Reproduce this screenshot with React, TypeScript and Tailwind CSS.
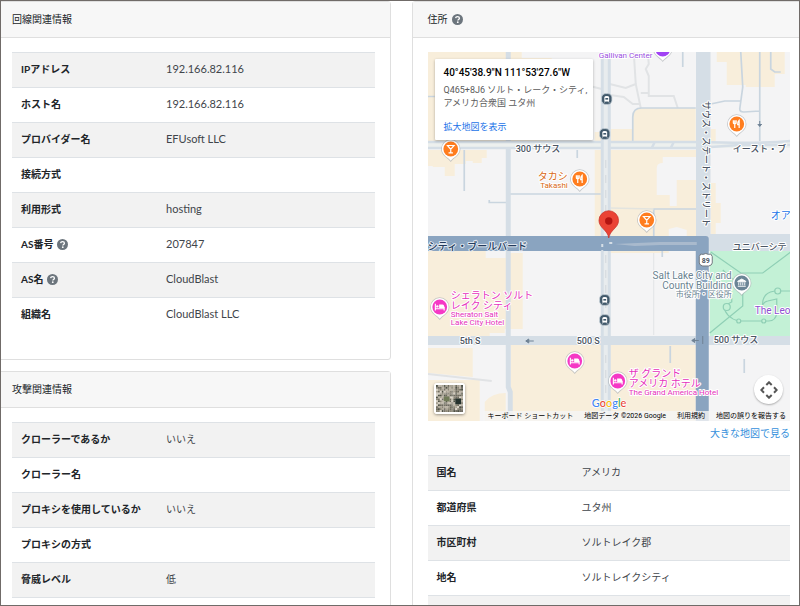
import type { ReactNode } from "react";

const UI_FONT = "font-['Lato','Noto_Sans_CJK_JP',sans-serif]";
const MAP_FONT = "font-['Roboto','Noto_Sans_CJK_JP',sans-serif]";

function HelpIcon() {
  return (
    <svg viewBox="0 0 20 20" className="ml-1 inline-block size-[11px] align-[-2px]" role="img" aria-label="ヘルプ">
      <circle cx="10" cy="10" r="10" fill="#6c757d" />
      <path d="M6.600 7.600C6.800 5.600 8.200 4.700 10 4.700c2 0 3.500 1.100 3.500 2.900 0 2.300-2.900 2.300-2.900 4.400" fill="none" stroke="#fff" strokeWidth="2.400" />
      <circle cx="10.500" cy="14.800" r="1.600" fill="#fff" />
    </svg>
  );
}

type Row = { label: string; value?: string; latin?: boolean; help?: boolean };

function InfoTable({ rows }: { rows: Row[] }) {
  return (
    <table className="w-full table-fixed border-collapse">
      <tbody>
        {rows.map((r) => (
          <tr key={r.label} className="h-[35px] border-t border-[#dee2e6] odd:border-b odd:bg-[#f2f2f2]">
            <th scope="row" className="w-2/5 px-[9px] pb-[2px] text-left text-[10px] leading-4 font-bold text-[#212529]">
              {r.label}
              {r.help && <HelpIcon />}
            </th>
            <td className={`px-[9px] pb-[2px] leading-4 text-[#3f454b] ${r.latin ? "text-[11px]" : "text-[10px]"}`}>{r.value}</td>
          </tr>
        ))}
      </tbody>
    </table>
  );
}

function Card({ title, help, children }: { title: string; help?: boolean; children: ReactNode }) {
  return (
    <section className="rounded-[3px] border border-[#dfdfdf] bg-white">
      <h2 className="flex h-9 items-center border-b border-[#dfdfdf] bg-[#f7f7f7] px-[15px] text-[10px] text-[#212529]">
        {title}
        {help && <HelpIcon />}
      </h2>
      <div className="px-[15px] pt-[14px] pb-[26px]">{children}</div>
    </section>
  );
}

/* ---------- map drawing ---------- */

const BEIGE = "#f8eedb";
const ROAD = "#d5dee6";
const BLUE = "#8aa4c0";

function Pin({ x, y, color, kind }: { x: number; y: number; color: string; kind: "food" | "bar" | "bed" | "civic" | "plain" }) {
  return (
    <g transform={`translate(${x} ${y})`}>
      <path d="M0 13C-2.500 9.200-9.700 6.800-9.700 0a9.700 9.700 0 0 1 19.400 0C9.700 6.800 2.500 9.200 0 13Z" fill="#a9adb2" opacity=".65" />
      <path d="M0 11.800C-2.500 8.200-8.900 6.300-8.900 0a8.900 8.900 0 0 1 17.800 0C8.900 6.300 2.500 8.200 0 11.800Z" fill="#fff" />
      <circle r="7.400" fill={color} />
      {kind === "food" && (
        <g stroke="#fff" strokeWidth="1.200" fill="none">
          <path d="M-3.400-3.800v2.600q0 1 1.400 1t1.400-1v-2.600M-2-3.800V4M2.400 4V-3.800Q.8-2.600.9.6h1.500" />
        </g>
      )}
      {kind === "bar" && (
        <path d="M-3.300-3.500h6.600L0 .4ZM0 0v3.800M-2.200 3.900h4.400" fill="none" stroke="#fff" strokeWidth="1.200" />
      )}
      {kind === "bed" && (
        <g>
          <path d="M-4.400-3.200V3.400M-4.400 1.800h8.800M4.400-.2v3.600" stroke="#fff" strokeWidth="1.100" fill="none" />
          <path d="M-.6-2.400h3.400q1.600 0 1.600 1.800v1.600h-5Z" fill="#fff" />
          <circle cx="-2.400" cy="-.6" r="1.200" fill="#fff" />
        </g>
      )}
      {kind === "civic" && (
        <path d="M-4-1.800 0-4l4 2.200v.6h-8ZM-3-.6v3M-1-.6v3M1-.6v3M3-.6v3M-4 3.300h8" fill="#fff" stroke="#fff" strokeWidth=".9" />
      )}
    </g>
  );
}

function Station({ y, x = 605 }: { y: number; x?: number }) {
  return (
    <g transform={`translate(${x} ${y})`}>
      <rect x="-5.200" y="-5.400" width="10.400" height="10.800" rx="4.200" fill="#41596b" stroke="#c9d3da" strokeWidth=".8" />
      <path d="M-2.400 2.400v-4Q-2.400-3 0-3t2.400 1.400v4Z" fill="#fff" />
      <path d="M-1.400-1h2.800v1.600h-2.800Z" fill="#41596b" />
      <path d="m-1.600 2.400-.9 1.200M1.600 2.400l.9 1.200" stroke="#fff" strokeWidth=".7" />
    </g>
  );
}

type LabelProps = {
  x: number;
  y: number;
  size?: number;
  fill?: string;
  halo?: string;
  anchor?: "start" | "end";
  weight?: number;
  transform?: string;
  children: string;
};

function Label({ x, y, size = 9, fill = "#4b5563", halo = "#ffffff", anchor = "start", weight = 500, transform, children }: LabelProps) {
  return (
    <text x={x} y={y} fontSize={size} fill={fill} stroke={halo} strokeWidth="2" strokeLinejoin="round" paintOrder="stroke" textAnchor={anchor} fontWeight={weight} transform={transform}>
      {children}
    </text>
  );
}

function MapDrawing() {
  return (
    <svg viewBox="428 52 363 369" preserveAspectRatio="xMidYMid slice" className="block h-full w-full" role="img" aria-label="ソルトレイクシティの地図">
      <rect x="428" y="52" width="363" height="369" fill="#f4f4f5" />

      <g fill={BEIGE}>
        <path d="M428 52h94v6h30v83H428Z" />
        <path d="M595 132h7v9h-7ZM428 150h59v8h-5v5h-9v-2h-7v3h-11v12h-10v-9h-12v-1h-5Z" />
        <path d="M595 150h102v86H595Z" />
        <path d="M428 250h58v8h20v-5h17v76h-18v4h-15v3h-62Z" />
        <path d="M428 348h45v29l-45-4ZM428 380h52v41h-52ZM485 402q7-9 21-9v28h-21Z" />
        <path d="M511 345h185v76H511Z" />
        <path d="M633 117q0-9 9-9h54v33h-85v-12h22Z" />
        <path d="M717 52h68v22h-10v13h-29v-2h-19v-23h-10ZM711 129h5v12h-5ZM711 183h5v20h5v20h-5v12h-5Z" />
        <path d="M611 250h58v3h-58Z" />
      </g>
      <path d="M657 168q0-5 6-5v-6h34v23h-20v26h-7v-11h-13ZM669 229l8-2 10 3v6h-18Z" fill="#f4f4f5" />
      <path d="M710 251h81v87h-81Z" fill="#c3f1d6" />

      <g fill="none" stroke="#e1e3e5" strokeWidth="2">
        <path d="M610 84l16 4 10-4-2-32M636 84l5 24M610 95l14 2 9 7h8M648 52l1 12-3 5 3 7v20h25l4 12M641 93h8M578 83l32 8M428 374l64 7" />
        <path d="M654 253v82" strokeWidth="1" />
      </g>
      <g fill="none" stroke="#c9d5df" strokeWidth="1.700">
        <path d="M428 96.500h7M464.500 150v41M577.500 150v8M489.500 200v2.500h17M508 194h93" />
        <path d="M633 141v-24q0-9 9-9h54M683 52v15M741 52l2 35-3 22q0 3 4 3l16-1M760 52v89M771 52v17l4 3h6M711 104l14-3h16" />
        <path d="M654 236v-27h43M662.500 250v7M670.500 346v17M744.500 359v14" />
        <path d="M611 208l43 1" stroke="#e3e4df" />
      </g>

      <g stroke={ROAD} fill="none">
        <path d="M508.500 52v335l2 5v29" strokeWidth="5" />
        <path d="M428 145h363" stroke="#edf0ee" strokeWidth="6" />
        <path d="M428 142h270q65 2 93-1M428 148h269l42-3h52" strokeWidth="2.500" />
        <path d="M652 148l3-6M671 148l3-6" strokeWidth="2.500" />
        <path d="M606 52v369" strokeWidth="9" stroke="#e8ecee" />
        <path d="M602.500 52v369M609.500 52v369" strokeWidth="3" />
        <path d="M606 160v70M606 255v75M606 355v60" stroke="#c8cfd4" strokeWidth=".7" strokeDasharray="8 7" />
        <path d="M428 340.500h363" strokeWidth="9" />
        <path d="M703.500 52v190" strokeWidth="14.500" />
        <path d="M708 242.500h83" strokeWidth="17" />
      </g>
      <path d="M428 236h278q3 0 3 3v182h-13V251H428Z" fill={BLUE} />
      <path d="M615 244l45-2h37v3h-37l-25 1Z" fill="#a9bacd" />
      <path d="M602.500 244v12M609.500 243h4" stroke={ROAD} strokeWidth="2" strokeDasharray="3 3" />
      <path d="M527 341h7m-5-2-3 2 3 2ZM693 340.500h6m-4-2-3 2 3 2ZM703 336v8M760 121v5m-2-2 2 2.500 2-2.500" stroke="#6f8295" strokeWidth="1" fill="#6f8295" />

      <g fill="none" stroke="#8fcfb5" strokeWidth="1.200">
        <path d="M711 252l30 21h22l28-21M710 333l33-27v-18l-20-18M732 298v4l-8 4q2 12 15 15h30q7 0 8-8v-14l-9 2q-6 1-6 10M778 291q-17 0-15 17M778 291h13" />
        <circle cx="727" cy="307" r="3.500" fill="#c3f1d6" />
        <circle cx="778" cy="291" r="3" fill="#c3f1d6" />
        <circle cx="739" cy="321" r="2" fill="#c3f1d6" />
        <circle cx="764" cy="321" r="2" fill="#c3f1d6" />
      </g>

      <Station y={99} x={607} />
      <Station y={134} />
      <Station y={300} />
      <Station y={320} />

      <Label x={516} y={152}>300 サウス</Label>
      <Label x={733} y={152}>イースト・ブ</Label>
      <Label x={428} y={250} size={10} fill="#243b5c" halo="#dfe7f0">シティ・ブールバード</Label>
      <Label x={733} y={250}>ユニバーシテ</Label>
      <Label x={460} y={344}>5th S</Label>
      <Label x={577} y={344}>500 S</Label>
      <Label x={714} y={343}>500 サウス</Label>
      <Label x={0} y={0} transform="translate(703 101) rotate(90)">サウス・ステート・ストリート</Label>

      <Pin x={663} y={49} color="#a142f4" kind="plain" />
      <Label x={599} y={58} size={8} fill="#9b4fe0" weight={400}>Gallivan Center</Label>
      <Pin x={451} y={149} color="#ff7d1f" kind="bar" />
      <Pin x={737} y={124} color="#ff7d1f" kind="food" />
      <Pin x={580} y={179} color="#ff7d1f" kind="food" />
      <Label x={568} y={180} size={10} fill="#d96a16" anchor="end" weight={400}>タカシ</Label>
      <Label x={568} y={188} size={8} fill="#d96a16" anchor="end" weight={400}>Takashi</Label>
      <Pin x={647} y={220} color="#ff7d1f" kind="bar" />
      <Label x={771} y={219} size={10} fill="#1a73e8" weight={400}>オア</Label>

      <g transform="translate(706 260)">
        <path d="M-5-6q2 1 5-.5Q3-5 5-6L6.500-3.500V3Q6 5.500 3 6H-3Q-6 5.500-6.500 3V-3.500Z" fill="#fff" stroke="#737980" strokeWidth="1" />
        <text textAnchor="middle" y="2.500" fontSize="7" fontWeight="700" fill="#4b5563">89</text>
      </g>
      <Pin x={742} y={283} color="#6c8596" kind="civic" />
      <Label x={732} y={279} size={10} fill="#6a8290" anchor="end" weight={400}>Salt Lake City and</Label>
      <Label x={732} y={289} size={10} fill="#6a8290" anchor="end" weight={400}>County Building</Label>
      <Label x={732} y={297} size={8} fill="#6a8290" anchor="end" weight={400}>市役所・区役所</Label>
      <Label x={755} y={314} size={10} fill="#8e4fd0" weight={400}>The Leo</Label>

      <Pin x={440} y={307} color="#f538c5" kind="bed" />
      <Label x={451} y={299} size={10} fill="#e632bb" weight={400}>シェラトン ソルト</Label>
      <Label x={451} y={309} size={10} fill="#e632bb" weight={400}>レイク シティ</Label>
      <Label x={451} y={317} size={8} fill="#e632bb" weight={400}>Sheraton Salt</Label>
      <Label x={451} y={325} size={8} fill="#e632bb" weight={400}>Lake City Hotel</Label>
      <Pin x={575} y={361} color="#f538c5" kind="bed" />
      <Pin x={618} y={381} color="#f538c5" kind="bed" />
      <Label x={629} y={377} size={10} fill="#e632bb" weight={400}>ザ グランド</Label>
      <Label x={629} y={387} size={10} fill="#e632bb" weight={400}>アメリカ ホテル</Label>
      <Label x={629} y={395} size={8} fill="#e632bb" weight={400}>The Grand America Hotel</Label>

      <path d="M609 238c-1-8-9.800-10-9.800-17.500a9.800 9.800 0 0 1 19.600 0c0 7.500-8.800 9.500-9.800 17.500Z" fill="#ea4335" stroke="#c5302a" strokeWidth=".7" />
      <circle cx="609" cy="221" r="3.700" fill="#b31412" />

      <text x="592" y="407" fontSize="11" fontWeight="500" stroke="#fff" strokeWidth="1.500" paintOrder="stroke" fontFamily="Lato">
        <tspan fill="#4285f4">G</tspan>
        <tspan fill="#ea4335">o</tspan>
        <tspan fill="#fbbc04">o</tspan>
        <tspan fill="#4285f4">g</tspan>
        <tspan fill="#34a853">l</tspan>
        <tspan fill="#ea4335">e</tspan>
      </text>
    </svg>
  );
}

const AERIAL_TONES = ["#6f6c5f", "#a7a193", "#d8d2c8", "#4e5147", "#8a8577", "#b9b2a6", "#6d6a62"];

function AerialThumb() {
  const cells = Array.from({ length: 196 }, (_, i) => {
    const mixed = (Math.imul(i + 11, 2654435761) >>> 0) ^ (Math.imul(i + 5, 40503) >>> 3);
    return AERIAL_TONES[(mixed >>> 9) % 7];
  });
  return (
    <svg viewBox="0 0 28 28" className="block size-[27px]">
      {cells.map((c, i) => (
        <rect key={i} x={(i % 14) * 2} y={Math.floor(i / 14) * 2} width="2" height="2" fill={c} />
      ))}
      <path d="M8 0v28M17 0v28M0 9h28M0 19h28" stroke="#c9c4ba" strokeWidth=".5" />
      <rect x="20" y="14" width="6" height="6" fill="#25312d" />
      <path d="M8 12h6v5H8Z" fill="#717b58" />
    </svg>
  );
}

function MapPanel() {
  return (
    <div className={`relative h-[369px] overflow-hidden ${MAP_FONT}`}>
      <MapDrawing />
      <div className="absolute top-[7px] left-[7px] h-[81px] w-[158px] rounded-[1px] bg-white px-[9px] pt-[7px] whitespace-nowrap shadow-[0_1px_3px_rgba(0,0,0,0.3)]">
        <p className="text-[10px] leading-[14px] font-medium text-black">40°45'38.9"N 111°53'27.6"W</p>
        <p className="pt-1 text-[9px] leading-[13px] text-[#5b5b5b]">
          Q465+8J6 ソルト・レーク・シティ,
          <br />
          アメリカ合衆国 ユタ州
        </p>
        <a href="#map" className="mt-[11px] block text-[9px] leading-[13px] text-[#1a73e8]">拡大地図を表示</a>
      </div>
      <button type="button" aria-label="航空写真を表示" className="absolute bottom-[7px] left-[6px] rounded-[3px] border-2 border-white shadow-[0_1px_3px_rgba(0,0,0,0.4)]">
        <AerialThumb />
      </button>
      <button type="button" aria-label="地図のカメラ コントロール" className="absolute right-[7px] bottom-[17px] grid size-[29px] place-items-center rounded-full bg-white shadow-[0_1px_2px_rgba(0,0,0,0.3)]">
        <svg viewBox="0 0 18 18" className="size-[18px]" fill="none" stroke="#555" strokeWidth="2">
          <path d="M6.300 4 9 1.300 11.700 4M6.300 14 9 16.700 11.700 14M4 6.300 1.300 9 4 11.700M14 6.300 16.700 9 14 11.700" />
        </svg>
      </button>
      <div className="absolute right-0 bottom-0 flex h-[10px] items-center gap-[11px] bg-[#f5f5f5]/80 px-1 text-[7px] leading-[10px] whitespace-nowrap text-black">
        <button type="button">キーボード ショートカット</button>
        <span>地図データ ©2026 Google</span>
        <a href="#terms">利用規約</a>
        <a href="#report">地図の誤りを報告する</a>
      </div>
    </div>
  );
}

const LINE_ROWS: Row[] = [
  { label: "IPアドレス", value: "192.166.82.116", latin: true },
  { label: "ホスト名", value: "192.166.82.116", latin: true },
  { label: "プロバイダー名", value: "EFUsoft LLC", latin: true },
  { label: "接続方式" },
  { label: "利用形式", value: "hosting", latin: true },
  { label: "AS番号", value: "207847", latin: true, help: true },
  { label: "AS名", value: "CloudBlast", latin: true, help: true },
  { label: "組織名", value: "CloudBlast LLC", latin: true },
];

const ATTACK_ROWS: Row[] = [
  { label: "クローラーであるか", value: "いいえ" },
  { label: "クローラー名" },
  { label: "プロキシを使用しているか", value: "いいえ" },
  { label: "プロキシの方式" },
  { label: "脅威レベル", value: "低" },
];

const PLACE_ROWS: Row[] = [
  { label: "国名", value: "アメリカ" },
  { label: "都道府県", value: "ユタ州" },
  { label: "市区町村", value: "ソルトレイク郡" },
  { label: "地名", value: "ソルトレイクシティ" },
  { label: "" },
];

export default function App() {
  return (
    <div lang="ja" className={`h-screen overflow-hidden border border-[#706b68] bg-white ${UI_FONT}`}>
      <main className="-mr-[7px] -ml-[5px] grid grid-cols-2 items-start gap-[21px]">
        <div className="flex flex-col gap-[11px]">
          <Card title="回線関連情報">
            <InfoTable rows={LINE_ROWS} />
          </Card>
          <Card title="攻撃関連情報">
            <InfoTable rows={ATTACK_ROWS} />
          </Card>
        </div>
        <Card title="住所" help>
          <MapPanel />
          <div className="mb-[13px] pt-[3px] text-right text-[10px] leading-[18px]">
            <a href="#large-map" className="text-[#3490dc]">大きな地図で見る</a>
          </div>
          <InfoTable rows={PLACE_ROWS} />
        </Card>
      </main>
    </div>
  );
}
